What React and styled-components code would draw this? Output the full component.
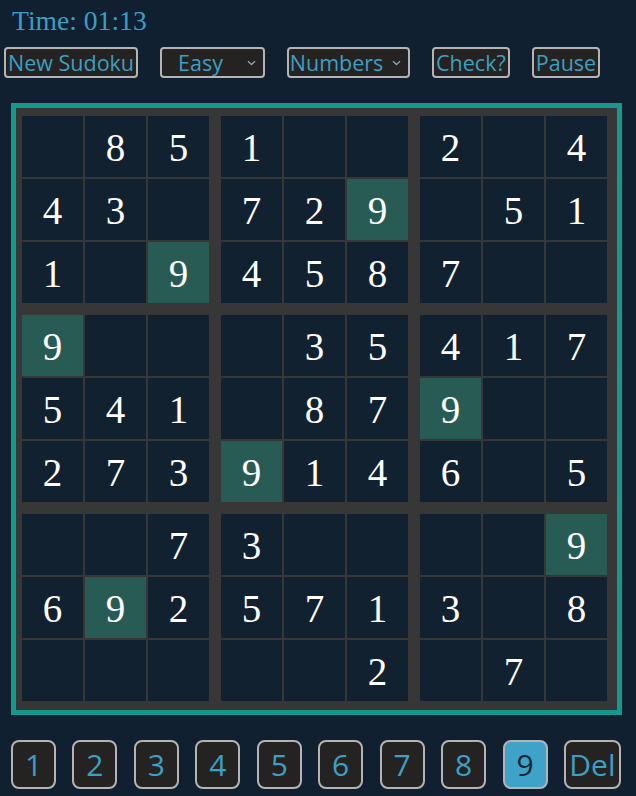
import React, { useState } from "react";
import styled, { createGlobalStyle } from "styled-components";

const puzzle = [
  [0, 8, 5, 1, 0, 0, 2, 0, 4],
  [4, 3, 0, 7, 2, 9, 0, 5, 1],
  [1, 0, 9, 4, 5, 8, 7, 0, 0],
  [9, 0, 0, 0, 3, 5, 4, 1, 7],
  [5, 4, 1, 0, 8, 7, 9, 0, 0],
  [2, 7, 3, 9, 1, 4, 6, 0, 5],
  [0, 0, 7, 3, 0, 0, 0, 0, 9],
  [6, 9, 2, 5, 7, 1, 3, 0, 8],
  [0, 0, 0, 0, 0, 2, 0, 7, 0],
];

function Chevron() {
  return (
    <svg width="9" height="6" viewBox="0 0 9 6">
      <path d="M1 1.2 L4.5 4.5 L8 1.2" fill="none" stroke="#8aa6b8" strokeWidth="1.3" />
    </svg>
  );
}

function App() {
  const [selected, setSelected] = useState(9);

  // cells of block b (0..8), row-major inside the block
  const blockCells = (b) => {
    const br = Math.floor(b / 3) * 3;
    const bc = (b % 3) * 3;
    const out = [];
    for (let r = 0; r < 3; r++) {
      for (let c = 0; c < 3; c++) {
        out.push(puzzle[br + r][bc + c]);
      }
    }
    return out;
  };

  return (
    <Page>
      <GlobalStyle />
      <Timer>Time: 01:13</Timer>
      <Toolbar>
        <ToolButton>New Sudoku</ToolButton>
        <Select $width={105}>
          <SelectLabel>Easy</SelectLabel>
          <Chevron />
        </Select>
        <Select $width={123}>
          <SelectLabel>Numbers</SelectLabel>
          <Chevron />
        </Select>
        <ToolButton>Check?</ToolButton>
        <ToolButton>Pause</ToolButton>
      </Toolbar>
      <Board>
        <Blocks>
          {Array.from({ length: 9 }, (_, b) => (
            <Block key={b}>
              {blockCells(b).map((v, i) => (
                <Cell key={i} $hit={v !== 0 && v === selected}>
                  {v || ""}
                </Cell>
              ))}
            </Block>
          ))}
        </Blocks>
      </Board>
      <NumPad>
        {[1, 2, 3, 4, 5, 6, 7, 8, 9].map((n) => (
          <NumButton key={n} $active={n === selected} onClick={() => setSelected(n)}>
            {n}
          </NumButton>
        ))}
        <NumButton $wide>Del</NumButton>
      </NumPad>
    </Page>
  );
}

export default App;

const GlobalStyle = createGlobalStyle`
  html, body {
    margin: 0;
    padding: 0;
    background: #112030;
  }
`;

const Page = styled.div`
  width: 636px;
  height: 796px;
  background: #112030;
  overflow: hidden;
`;

const Timer = styled.div`
  padding: 4px 0 0 12px;
  box-sizing: border-box;
  height: 47px;
  font-family: "Liberation Serif", "Times New Roman", serif;
  font-size: 27.6px;
  line-height: 34px;
  color: #3c9dc4;
`;

const Toolbar = styled.div`
  display: flex;
  align-items: center;
  gap: 22px;
  padding-left: 4px;
  height: 31px;
`;

const ToolButton = styled.div`
  box-sizing: border-box;
  height: 31px;
  padding: 0 2px;
  display: flex;
  align-items: center;
  border: 2px solid #b4b4b4;
  border-radius: 4px;
  background: #252321;
  color: #3b9fc6;
  font-family: "Open Sans", "DejaVu Sans", sans-serif;
  font-size: 21.5px;
  cursor: pointer;
`;

const Select = styled(ToolButton)`
  width: ${(p) => p.$width}px;
  padding: 0 7px 0 0;
`;

const SelectLabel = styled.span`
  flex: 1;
  text-align: center;
  padding-right: 8px;
`;

const Board = styled.div`
  margin: 25px 0 0 11px;
  width: 611px;
  box-sizing: border-box;
  border: 5px solid #16998d;
  background: #373737;
  padding: 8px 10px 9px 6px;
`;

const Blocks = styled.div`
  display: grid;
  grid-template-columns: repeat(3, auto);
  gap: 12px;
  width: max-content;
`;

const Block = styled.div`
  display: grid;
  grid-template-columns: repeat(3, 61px);
  grid-auto-rows: 61px;
  gap: 2px;
`;

const Cell = styled.div`
  display: flex;
  align-items: center;
  justify-content: center;
  background: ${(p) => (p.$hit ? "#275b54" : "#12212f")};
  color: #ffffff;
  font-family: "Liberation Serif", "Times New Roman", serif;
  font-size: 39px;
  padding-top: 2px;
  box-sizing: border-box;
`;

const NumPad = styled.div`
  display: flex;
  justify-content: space-between;
  margin: 25px 0 0 11px;
  width: 610px;
`;

const NumButton = styled.div`
  box-sizing: border-box;
  width: ${(p) => (p.$wide ? 57 : 45)}px;
  height: 49px;
  display: flex;
  align-items: center;
  justify-content: center;
  border: 2px solid #b4b4b4;
  border-radius: 8px;
  background: ${(p) => (p.$active ? "#3ea2c9" : "#252321")};
  color: ${(p) => (p.$active ? "#1b2735" : "#3b9fc6")};
  font-family: "Open Sans", "DejaVu Sans", sans-serif;
  font-size: 30px;
  cursor: pointer;
`;
